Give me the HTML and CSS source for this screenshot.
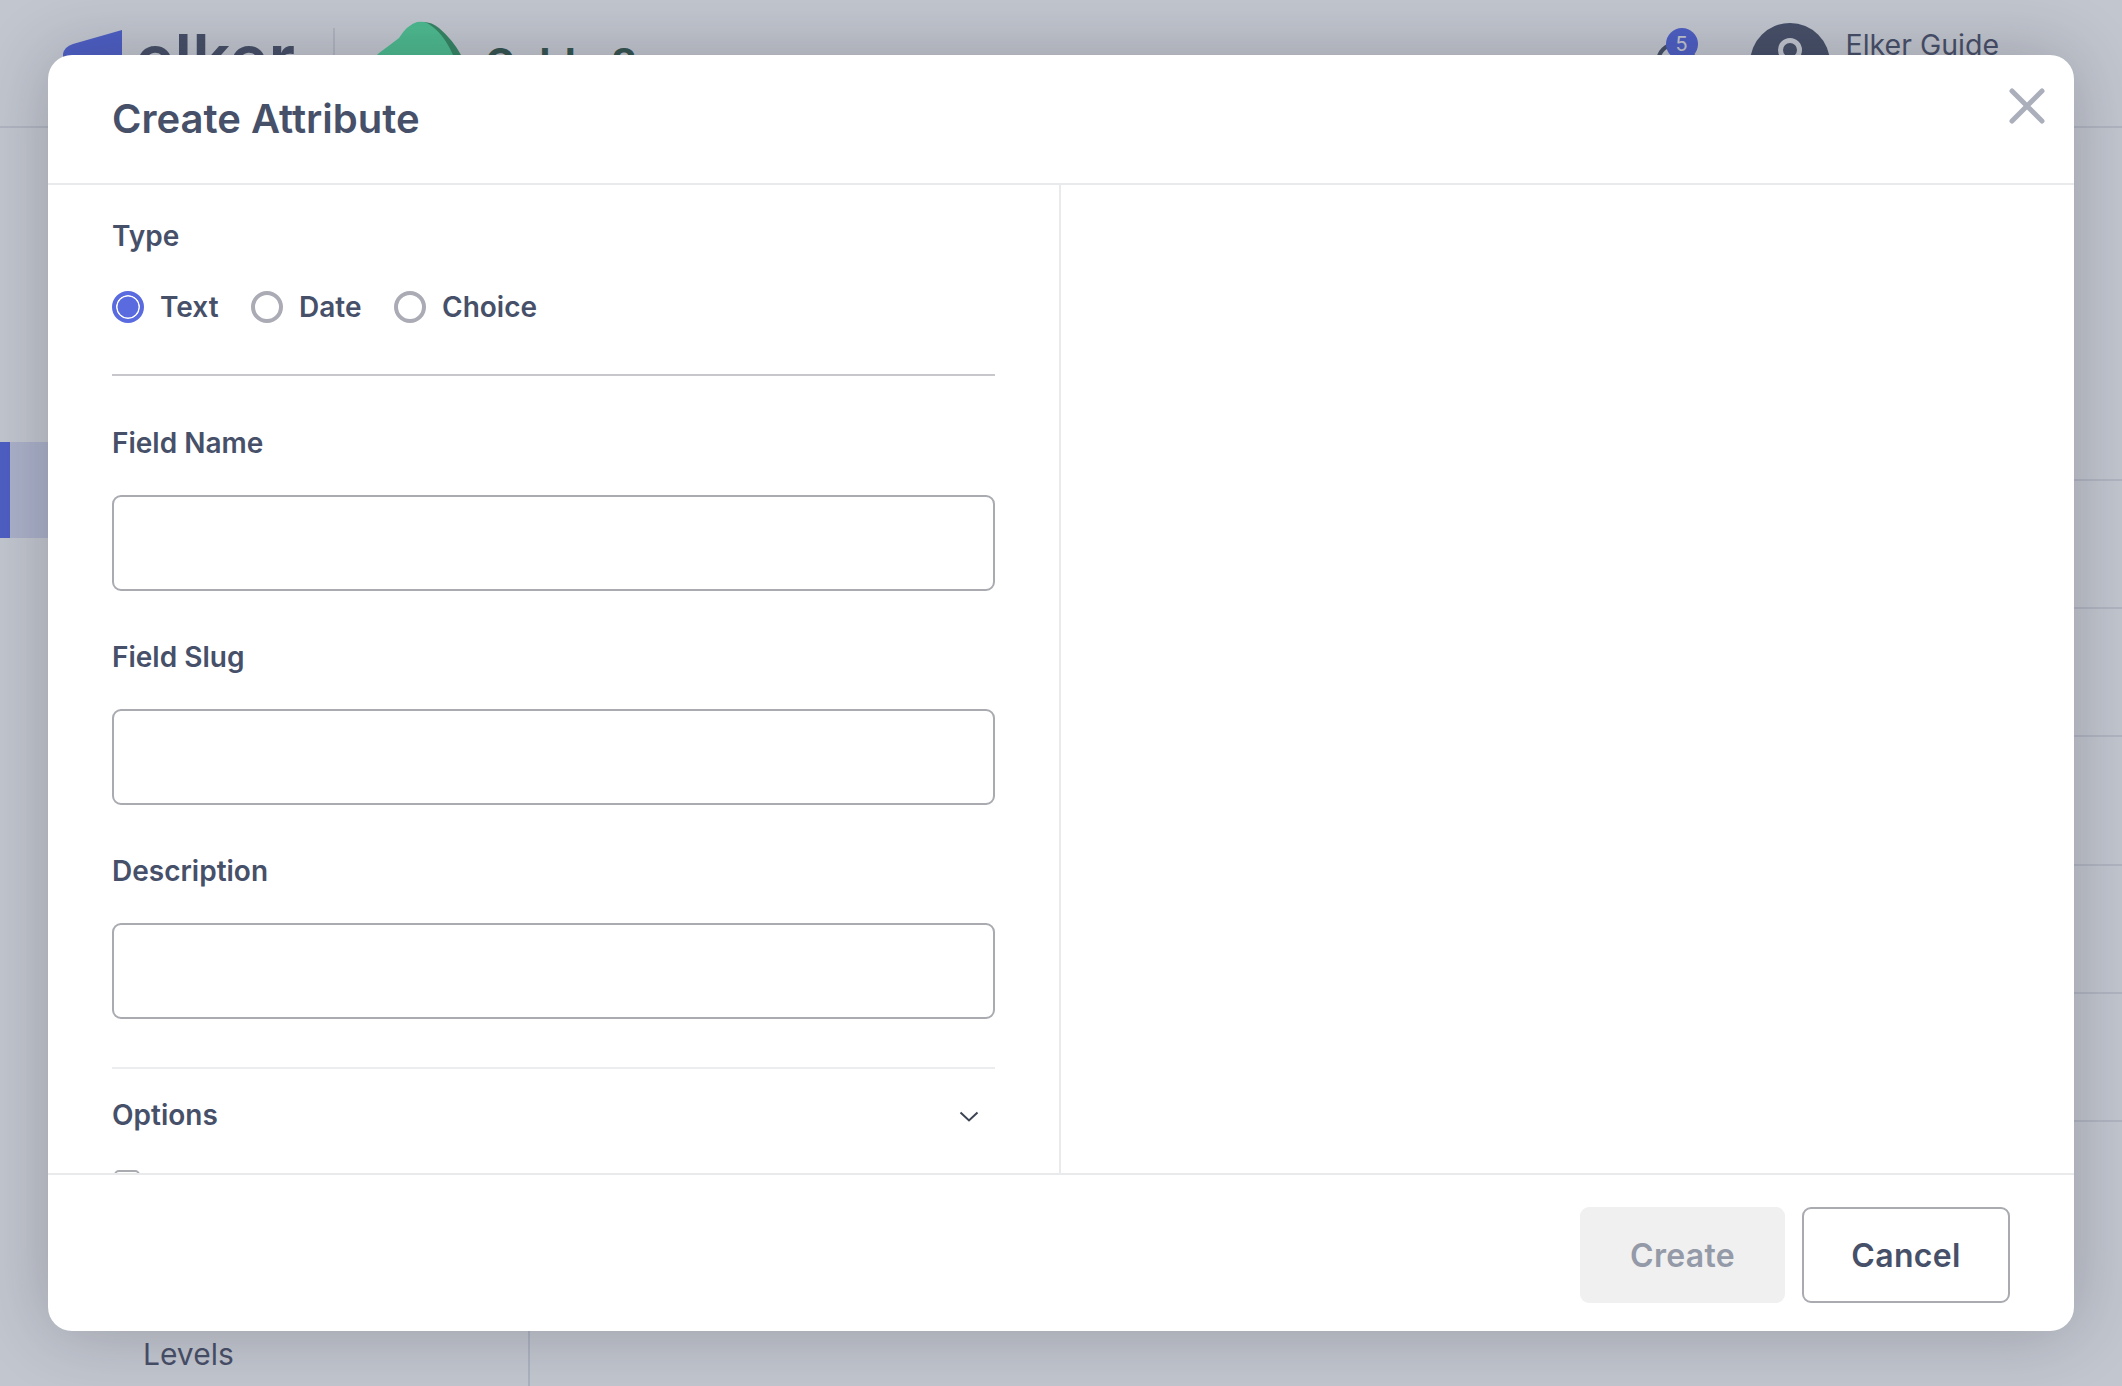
FILE: index.html
```html
<!DOCTYPE html>
<html lang="en">
<head>
<meta charset="utf-8">
<title>Create Attribute</title>
<link rel="stylesheet" href="styles.css">
</head>
<body>
<div class="page">
  <header class="topbar">
    <div class="brand">
      <svg class="logo-mark" viewBox="0 0 60 40"><path d="M0 40V24Q1 17 10 14L59 0V40Z" fill="#2d44eb"/></svg>
      <span class="logo-word">elker</span>
      <span class="brand-sep"></span>
      <svg class="store-mark" viewBox="0 0 88 50"><path d="M46 2Q56 1 64 8Q78 20 86 35V50H76V35Q68 12 50 3Z" fill="#00893e"/><path d="M2 50V35L4 33Q15 25 24 18Q32 5 42 2Q48 1 52 3Q68 12 78 35V50Z" fill="#2ae98d"/></svg>
      <span class="store-name">Gold 8</span>
    </div>
    <div class="account">
      <span class="bell"><span class="bell-count">5</span></span>
      <span class="avatar"><span class="avatar-head"></span></span>
      <span class="account-name">Elker Guide</span>
    </div>
  </header>
  <div class="body">
    <aside class="sidebar">
      <div class="side-active"></div>
      <div class="side-link">Levels</div>
    </aside>
    <main class="rows">
      <div class="row"></div><div class="row"></div><div class="row"></div>
      <div class="row"></div><div class="row"></div><div class="row"></div>
    </main>
  </div>
  <div class="dim"></div>
  <section class="modal">
    <div class="modal-head">
      <h1 class="modal-title">Create Attribute</h1>
      <svg class="close" viewBox="0 0 36 36"><path d="M3 3L33 33M33 3L3 33" stroke="#abafbb" stroke-width="5" stroke-linecap="round"/></svg>
    </div>
    <div class="modal-body">
      <form class="form">
        <div class="field-label type-label">Type</div>
        <div class="radios">
          <label class="radio-item"><span class="radio radio-on"></span>Text</label>
          <label class="radio-item"><span class="radio"></span>Date</label>
          <label class="radio-item"><span class="radio"></span>Choice</label>
        </div>
        <hr class="rule">
        <div class="field-label">Field Name</div>
        <div class="input"></div>
        <div class="field-label">Field Slug</div>
        <div class="input"></div>
        <div class="field-label">Description</div>
        <div class="input input-last"></div>
        <hr class="rule-light">
        <div class="options">
          <span class="field-label">Options</span>
          <svg class="chevron" viewBox="0 0 20 11"><path d="M1.5 1.5L10 9.500L18.500 1.500" fill="none" stroke="#3c4352" stroke-width="2"/></svg>
        </div>
        <div class="checkbox"></div>
      </form>
      <div class="preview"></div>
    </div>
    <div class="modal-foot">
      <button class="btn btn-disabled" type="button">Create</button>
      <button class="btn btn-outline" type="button">Cancel</button>
    </div>
  </section>
</div>
</body>
</html>
```
FILE: styles.css
```css
* { box-sizing: border-box; }
html, body { margin: 0; padding: 0; }
body { font-family: Inter, "Liberation Sans", sans-serif; color: #475069; background: #c3c7d0; }
.page { position: relative; width: 2122px; height: 1386px; overflow: hidden; background: #fff; }

.topbar { height: 128px; border-bottom: 2px solid #e1e0e8; display: flex; justify-content: space-between; padding: 22px 123px 0 63px; color: #1f2946; }
.brand { display: flex; align-items: flex-start; }
.logo-mark { width: 60px; height: 40px; margin-top: 8px; }
.logo-word { font-size: 67px; font-weight: 600; line-height: 56px; margin: 9px 0 0 12px; width: 182px; }
.brand-sep { width: 2px; height: 60px; margin: 6px 0 0 16px; background: #dfe0e6; }
.store-mark { width: 88px; height: 50px; margin: -2px 0 0 40px; }
.store-name { font-size: 40px; font-weight: 700; line-height: 50px; word-spacing: 26px; margin: 16px 0 0 22px; color: #00321a; }
.account { display: flex; align-items: flex-start; }
.bell { position: relative; width: 40px; height: 40px; margin-top: 20px; border: 4px solid #1f2946; border-radius: 50%; }
.bell-count { position: absolute; left: 6px; top: -18px; width: 32px; height: 32px; border-radius: 50%; background: #2d44eb; color: #fff; font-size: 20px; line-height: 32px; text-align: center; }
.avatar { position: relative; width: 80px; height: 80px; margin: 1px 0 0 54px; border-radius: 50%; background: #1f2946; }
.avatar-head { position: absolute; left: 28px; top: 15px; width: 24px; height: 24px; border-radius: 50%; border: 5px solid #fff; }
.account-name { font-size: 28.500px; line-height: 36px; margin: 5px 0 0 16px; }

.body { display: flex; height: 1258px; }
.sidebar { width: 530px; border-right: 2px solid #d8dae4; padding-top: 314px; }
.side-active { height: 96px; background: #d5d9f4; border-left: 10px solid #2d44eb; }
.side-link { font-size: 30px; line-height: 36px; margin: 798px 0 0 143px; color: #1f2946; }
.rows { flex: 1; padding-top: 351px; }
.row { height: 128.2px; border-top: 2px solid #e1e0e8; }

.dim { position: absolute; inset: 0; background: rgba(120, 128, 148, 0.45); }

.modal { position: absolute; left: 48px; top: 55px; width: 2026px; height: 1276px; display: flex; flex-direction: column; background: #fff; border-radius: 24px; box-shadow: 0 0 70px rgba(20, 22, 30, 0.24); }
.modal-head { position: relative; height: 130px; flex: none; border-bottom: 2px solid #e8eaec; padding: 40px 64px 0; }
.modal-title { margin: 0; font-size: 40px; line-height: 48px; font-weight: 600; color: #475069; }
.close { position: absolute; right: 29px; top: 33px; width: 36px; height: 36px; }
.modal-body { flex: 1; min-height: 0; display: flex; overflow: hidden; }
.form { width: 1013px; flex: none; padding: 34px 64px 0; border-right: 2px solid #e8eaec; overflow: hidden; }
.preview { flex: 1; }
.field-label { font-size: 28px; line-height: 34px; font-weight: 600; color: #475069; }
.type-label { margin-bottom: 38px; }
.radios { display: flex; gap: 32.500px; }
.radio-item { display: flex; align-items: center; gap: 16px; height: 32px; font-size: 28px; font-weight: 600; color: #475069; }
.radio { width: 32px; height: 32px; flex: none; border-radius: 50%; border: 4px solid #aaabb4; background: #fff; }
.radio-on { border-color: #5a6be0; background: #5a6be0; box-shadow: inset 0 0 0 1.500px #fff; }
.rule { height: 2px; margin: 51px 0 50px; border: 0; background: #c8c8cc; }
.input { height: 96px; margin: 35px 0 49px; border: 2px solid #a9abb1; border-radius: 9px; background: #fff; }
.input-last { margin-bottom: 48px; }
.rule-light { height: 2px; margin: 0; border: 0; background: #ecedef; }
.options { display: flex; justify-content: space-between; align-items: center; height: 92px; padding-right: 16px; }
.chevron { width: 20px; height: 11px; margin-top: 2px; }
.checkbox { width: 26px; height: 26px; margin: 9px 0 0 2px; border: 2px solid #a9abb1; border-radius: 5px; }
.modal-foot { flex: none; height: 158px; border-top: 2px solid #e8eaec; display: flex; justify-content: flex-end; gap: 17px; padding: 32px 64px 0; }
.btn { height: 96px; border-radius: 9px; font-family: inherit; font-size: 32px; font-weight: 600; letter-spacing: 0.300px; }
.btn-disabled { width: 205px; border: 0; background: #f0f0f1; color: #949aa8; }
.btn-outline { width: 208px; border: 2px solid #a9abb1; background: #fff; color: #475069; }
```
